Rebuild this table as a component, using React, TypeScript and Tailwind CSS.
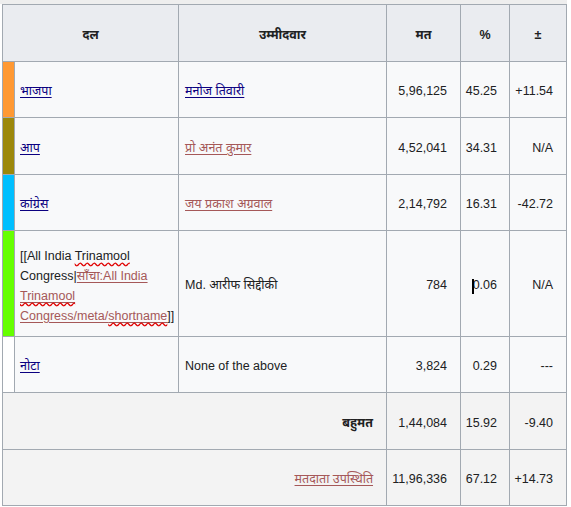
import React from 'react';

type Row = {
    color: string;
    party: React.ReactNode;
    candidate: React.ReactNode;
    votes: string;
    pct: React.ReactNode;
    swing: string;
    h: string;
};

const blueLink = 'text-[#0b0080] underline underline-offset-2';
const redLink = 'text-[#a55858] underline underline-offset-2';
const wavy = 'underline decoration-wavy decoration-[#e00000] underline-offset-2';

const rows: Row[] = [
    {
        color: 'bg-[#ff9933]',
        party: <a className={blueLink}>भाजपा</a>,
        candidate: <a className={blueLink}>मनोज तिवारी</a>,
        votes: '5,96,125',
        pct: '45.25',
        swing: '+11.54',
        h: 'h-[56px]',
    },
    {
        color: 'bg-[#9c880b]',
        party: <a className={blueLink}>आप</a>,
        candidate: <a className={redLink}>प्रो अनंत कुमार</a>,
        votes: '4,52,041',
        pct: '34.31',
        swing: 'N/A',
        h: 'h-[57px]',
    },
    {
        color: 'bg-[#00bfff]',
        party: <a className={blueLink}>कांग्रेस</a>,
        candidate: <a className={redLink}>जय प्रकाश अग्रवाल</a>,
        votes: '2,14,792',
        pct: '16.31',
        swing: '-42.72',
        h: 'h-[56px]',
    },
    {
        color: 'bg-[#66ff00]',
        party: (
            <span className="block leading-[20px]">
                [[All India <span className={wavy}>Trinamool</span> Congress|
                <a className={redLink}>
                    साँचा:All India <span className={wavy}>Trinamool</span> Congress/meta/
                    <span className={wavy}>shortname</span>
                </a>
                ]]
            </span>
        ),
        candidate: 'Md. आरीफ सिद्दीकी',
        votes: '784',
        pct: (
            <span className="relative">
                <span className="absolute left-[-1px] top-[1px] h-[15px] w-[2px] bg-black" />
                0.06
            </span>
        ),
        swing: 'N/A',
        h: 'h-[106px]',
    },
    {
        color: 'bg-white',
        party: <a className={blueLink}>नोटा</a>,
        candidate: 'None of the above',
        votes: '3,824',
        pct: '0.29',
        swing: '---',
        h: 'h-[56px]',
    },
];

const cell = 'border border-[#a2a9b1] align-middle pt-[4px]';

export default function App() {
    return (
        <div
            className="min-h-[507px] w-[571px] bg-white text-[12.5px] text-[#202122]"
            style={{ fontFamily: '"Liberation Sans", Arial, "Noto Sans", sans-serif' }}
        >
            <div className="h-[4px] w-[567px] bg-[#eeeeee]" />
            <table className="ml-[2px] w-[565px] table-fixed border-collapse">
                <colgroup>
                    <col className="w-[12px]" />
                    <col className="w-[164px]" />
                    <col className="w-[208px]" />
                    <col className="w-[74px]" />
                    <col className="w-[49px]" />
                    <col className="w-[57px]" />
                </colgroup>
                <thead>
                    <tr className="h-[57px] bg-[#eaecf0] font-bold">
                        <th colSpan={2} className={`${cell} text-center`}>दल</th>
                        <th className={`${cell} text-center`}>उम्मीदवार</th>
                        <th className={`${cell} text-center`}>मत</th>
                        <th className={`${cell} text-center`}>%</th>
                        <th className={`${cell} text-center`}>±</th>
                    </tr>
                </thead>
                <tbody>
                    {rows.map((r, i) => (
                        <tr key={i} className={`${r.h} bg-[#f8f9fa]`}>
                            <td className={`${cell} ${r.color} p-0`} />
                            <td className={`${cell} pl-[5px] pr-[4px]`}>{r.party}</td>
                            <td className={`${cell} pl-[6px] pr-[4px]`}>{r.candidate}</td>
                            <td className={`${cell} pr-[13px] text-right`}>{r.votes}</td>
                            <td className={`${cell} pr-[12px] text-right`}>{r.pct}</td>
                            <td className={`${cell} pr-[13px] text-right`}>{r.swing}</td>
                        </tr>
                    ))}
                    <tr className="h-[57px] bg-[#f3f3f3]">
                        <td colSpan={3} className={`${cell} pr-[13px] text-right font-bold`}>बहुमत</td>
                        <td className={`${cell} pr-[13px] text-right`}>1,44,084</td>
                        <td className={`${cell} pr-[12px] text-right`}>15.92</td>
                        <td className={`${cell} pr-[13px] text-right`}>-9.40</td>
                    </tr>
                    <tr className="h-[56px] bg-[#f3f3f3]">
                        <td colSpan={3} className={`${cell} pr-[13px] text-right`}>
                            <a className={redLink}>मतदाता उपस्थिति</a>
                        </td>
                        <td className={`${cell} pr-[13px] text-right`}>11,96,336</td>
                        <td className={`${cell} pr-[12px] text-right`}>67.12</td>
                        <td className={`${cell} pr-[13px] text-right`}>+14.73</td>
                    </tr>
                </tbody>
            </table>
        </div>
    );
}
